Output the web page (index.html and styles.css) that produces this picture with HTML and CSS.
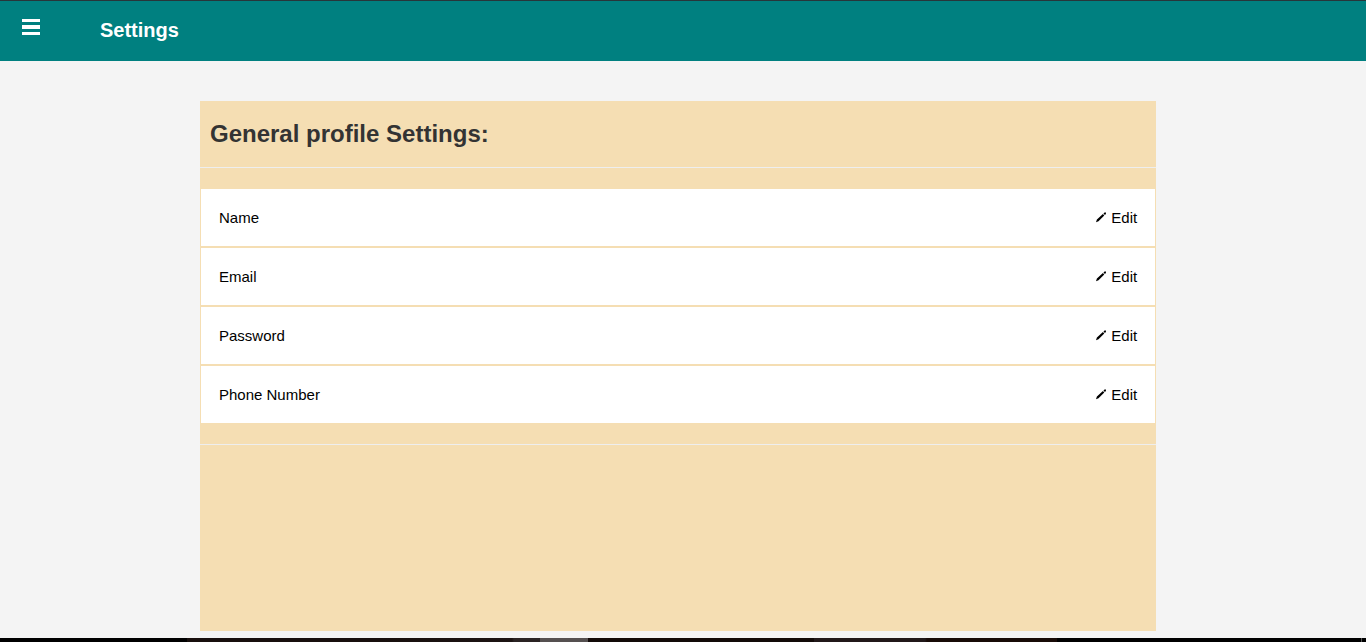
FILE: index.html
```html
<!DOCTYPE html>
<html lang="en">
<head>
<meta charset="utf-8">
<title>Settings</title>
<link rel="stylesheet" href="styles.css">
</head>
<body>
<header class="topbar">
  <button class="menu-button" type="button" aria-label="Menu">
    <svg class="menu-icon" viewBox="0 0 18 16" shape-rendering="crispEdges" aria-hidden="true"><path d="M0 0h18v3H0zM0 6h18v4H0zM0 13h18v3H0z"/></svg>
  </button>
  <h1 class="page-title">Settings</h1>
</header>
<main class="content">
  <section class="panel">
    <h2 class="panel-title">General profile Settings:</h2>
    <hr class="rule">
    <ul class="rows">
      <li class="row"><span>Name</span><button class="edit" type="button" aria-label="Edit name"><svg class="pencil" viewBox="0 0 10 12" aria-hidden="true"><path d="M0 10.200l.9-2.700L6.900 2 8.300 3.400 2.500 9.300zM7.500 1.400L8.500.5 10 .6 9.900 2 8.900 2.900z"/></svg>Edit</button></li>
      <li class="row"><span>Email</span><button class="edit" type="button" aria-label="Edit email"><svg class="pencil" viewBox="0 0 10 12" aria-hidden="true"><path d="M0 10.200l.9-2.700L6.900 2 8.300 3.400 2.500 9.300zM7.500 1.400L8.500.5 10 .6 9.900 2 8.900 2.900z"/></svg>Edit</button></li>
      <li class="row"><span>Password</span><button class="edit" type="button" aria-label="Edit password"><svg class="pencil" viewBox="0 0 10 12" aria-hidden="true"><path d="M0 10.200l.9-2.700L6.900 2 8.300 3.400 2.500 9.300zM7.500 1.400L8.500.5 10 .6 9.900 2 8.900 2.900z"/></svg>Edit</button></li>
      <li class="row"><span>Phone Number</span><button class="edit" type="button" aria-label="Edit phone number"><svg class="pencil" viewBox="0 0 10 12" aria-hidden="true"><path d="M0 10.200l.9-2.700L6.900 2 8.300 3.400 2.500 9.300zM7.500 1.400L8.500.5 10 .6 9.900 2 8.900 2.900z"/></svg>Edit</button></li>
    </ul>
    <hr class="rule">
  </section>
</main>
<footer class="taskbar"></footer>
</body>
</html>
```

FILE: styles.css
```css
* { box-sizing: border-box; }

body {
  display: flex;
  flex-direction: column;
  min-height: 100vh;
  margin: 0;
  background: #f4f4f4;
  color: #000;
  font: 15px/21px "Liberation Sans", Arial, sans-serif;
}

button {
  padding: 0;
  border: 0;
  background: none;
  color: inherit;
  font: inherit;
  cursor: pointer;
}

.topbar {
  display: flex;
  align-items: flex-start;
  gap: 60px;
  padding: 15px 22px 17px;
  border-top: 1px solid #27363a;
  background: teal;
  color: #fff;
}

.menu-button { padding-top: 3px; }

.menu-icon {
  display: block;
  width: 18px;
  height: 16px;
  fill: #fff;
}

.page-title {
  margin: 0;
  font-size: 20px;
  line-height: 28px;
}

.content {
  display: flex;
  flex: 1;
  padding: 40px 0 7px 200px;
}

.panel {
  width: 70vw;
  background: wheat;
}

.panel-title {
  margin: 0;
  padding: 15px 10px;
  color: #333;
  font-size: 24px;
  line-height: 36px;
}

.rule {
  margin: 0;
  border: 0;
  border-top: 1px solid #eee;
}

.rows {
  display: grid;
  gap: 2px;
  margin: 0;
  padding: 21px 1px;
  list-style: none;
}

.row {
  display: flex;
  align-items: center;
  justify-content: space-between;
  padding: 18px;
  background: #fff;
}

.edit {
  display: flex;
  align-items: center;
  gap: 5px;
}

.pencil {
  width: 10px;
  height: 12px;
}

.taskbar {
  height: 4px;
  background: linear-gradient(to right,
    #000 0 187px, #180f0d 187px 380px, #1c1413 512px,
    #2a2323 514px 540px, #555050 540px 588px,
    #120a08 588px 814px, #211819 814px 925px,
    #180b07 927px 1057px, #000 1057px 1361px,
    #555 1361px 1362px, #000 1362px);
}
```
